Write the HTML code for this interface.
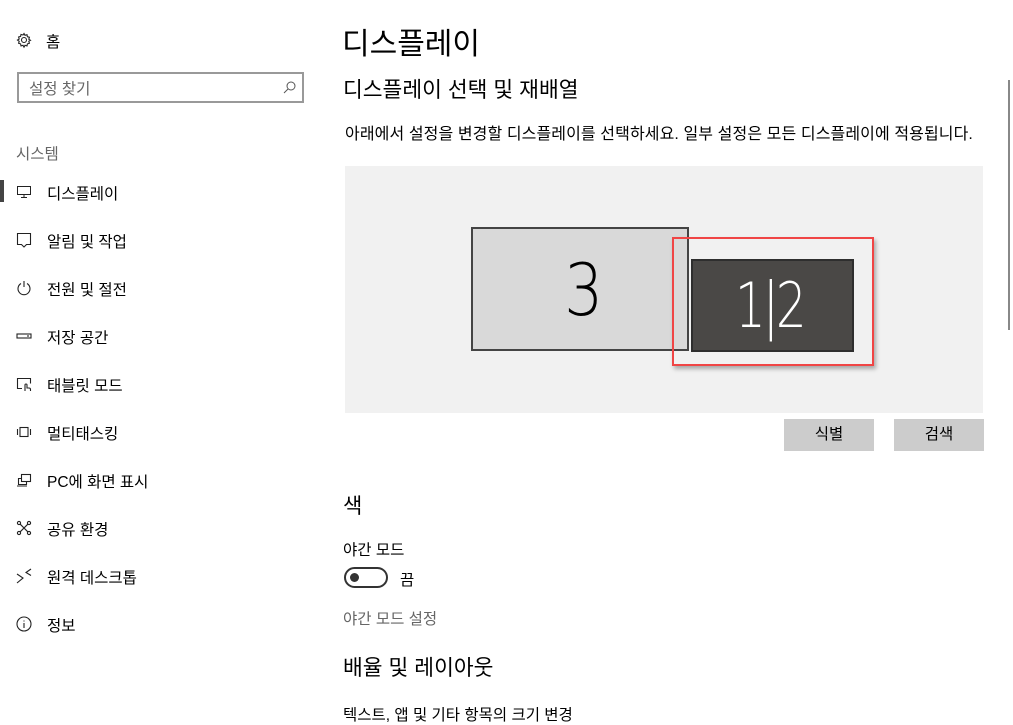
<!DOCTYPE html>
<html><head><meta charset="utf-8"><style>
*{margin:0;padding:0;box-sizing:border-box}
body{width:1013px;height:711px;overflow:hidden;background:#fff;font-family:"Liberation Sans","Noto Sans CJK KR","NanumGothic",sans-serif;color:#000;position:relative}
.a{position:absolute;white-space:nowrap}
.nav{font-size:15.5px;color:#000}
.ic{position:absolute;left:16px;width:16px;height:16px}
svg{overflow:visible}
</style></head><body>
<svg class="ic" style="top:32px" viewBox="0 0 16 16" fill="none" stroke="#222" stroke-width="1.1"><circle cx="8" cy="8" r="2.5"/><path d="M8 1.5l1 1.8 2-.6.4 2 2 .6-.6 2 1.7 1-1.7 1 .6 2-2 .6-.4 2-2-.6-1 1.8-1-1.8-2 .6-.4-2-2-.6.6-2L1.5 8l1.7-1-.6-2 2-.6.4-2 2 .6z"/></svg>
<div class="a nav" style="left:46px;top:30px">홈</div>
<div class="a" style="left:17px;top:72px;width:287px;height:31px;border:2px solid #999"></div>
<div class="a" style="left:29px;top:77px;font-size:15.5px;color:#666">설정 찾기</div>
<svg class="a" style="left:283px;top:81px;width:13px;height:13px" viewBox="0 0 13 13" fill="none" stroke="#555" stroke-width="1"><circle cx="8" cy="5" r="4"/><path d="M5 8L1 12"/></svg>
<div class="a" style="left:16px;top:142px;font-size:15.5px;color:#666">시스템</div>
<div class="a" style="left:0;top:180px;width:4px;height:22px;background:#444"></div>

<svg class="ic" style="top:184px" viewBox="0 0 16 16" fill="none" stroke="#222" stroke-width="1"><rect x="1.5" y="2.5" width="13" height="8"/><path d="M8 10.5v3M5 13.5h6"/></svg>
<div class="a nav" style="left:47px;top:182px">디스플레이</div>
<svg class="ic" style="top:232px" viewBox="0 0 16 16" fill="none" stroke="#222" stroke-width="1.1"><path d="M1.5 1.5h13v11h-4l-2.5 2.5-2.5-2.5h-4z"/></svg>
<div class="a nav" style="left:47px;top:230px">알림 및 작업</div>
<svg class="ic" style="top:280px" viewBox="0 0 16 16" fill="none" stroke="#222" stroke-width="1.1"><path d="M5 3.5a6 6 0 1 0 6 0M8 1v6"/></svg>
<div class="a nav" style="left:47px;top:278px">전원 및 절전</div>
<svg class="ic" style="top:328px" viewBox="0 0 16 16" fill="none" stroke="#222" stroke-width="1.1"><rect x="1" y="6" width="14" height="4"/><path d="M11 8h2"/></svg>
<div class="a nav" style="left:47px;top:326px">저장 공간</div>
<svg class="ic" style="top:376px" viewBox="0 0 16 16" fill="none" stroke="#222" stroke-width="1.1"><path d="M6 12.5H1.5v-10h13v5"/><path d="M9 15v-6a1 1 0 0 1 2 0v3h2a1.5 1.5 0 0 1 1.5 1.5V15"/></svg>
<div class="a nav" style="left:47px;top:374px">태블릿 모드</div>
<svg class="ic" style="top:424px" viewBox="0 0 16 16" fill="none" stroke="#222" stroke-width="1.1"><rect x="4" y="3.5" width="8" height="9"/><path d="M1.5 5v6M14.5 5v6"/></svg>
<div class="a nav" style="left:47px;top:422px">멀티태스킹</div>
<svg class="ic" style="top:472px" viewBox="0 0 16 16" fill="none" stroke="#222" stroke-width="1.1"><rect x="5.5" y="2.5" width="9" height="7"/><path d="M5.5 6.5h-3v6h8v-3M1 14h10"/></svg>
<div class="a nav" style="left:47px;top:470px">PC에 화면 표시</div>
<svg class="ic" style="top:520px" viewBox="0 0 16 16" fill="none" stroke="#222" stroke-width="1.1"><circle cx="3" cy="3" r="1.6"/><circle cx="13" cy="3" r="1.6"/><circle cx="3" cy="13" r="1.6"/><circle cx="13" cy="13" r="1.6"/><path d="M4.2 4.2l7.6 7.6M11.8 4.2l-7.6 7.6"/></svg>
<div class="a nav" style="left:47px;top:518px">공유 환경</div>
<svg class="ic" style="top:568px" viewBox="0 0 16 16" fill="none" stroke="#222" stroke-width="1.1"><path d="M1 6l6 4-6 5M15 1l-5 3.5 5 3"/></svg>
<div class="a nav" style="left:47px;top:566px">원격 데스크톱</div>
<svg class="ic" style="top:616px" viewBox="0 0 16 16" fill="none" stroke="#222" stroke-width="1.1"><circle cx="8" cy="8" r="7"/><path d="M8 7v5M8 4.5v1"/></svg>
<div class="a nav" style="left:47px;top:614px">정보</div>

<div class="a" style="left:342px;top:19px;font-size:30px">디스플레이</div>
<div class="a" style="left:343px;top:73px;font-size:21.5px">디스플레이 선택 및 재배열</div>
<div class="a" style="left:345px;top:120px;font-size:16px;letter-spacing:0.1px">아래에서 설정을 변경할 디스플레이를 선택하세요. 일부 설정은 모든 디스플레이에 적용됩니다.</div>
<div class="a" style="left:1008px;top:80px;width:2px;height:250px;background:#888"></div>

<div class="a" style="left:345px;top:166px;width:638px;height:247px;background:#f1f1f1"></div>
<div class="a" style="left:471px;top:227px;width:218px;height:124px;background:#d9d9d9;border:2px solid #444"></div>
<div class="a" style="left:561px;top:245px;font-size:72px;font-weight:300;font-family:'DejaVu Sans','Liberation Sans',sans-serif;line-height:90px;transform:scaleX(.85);letter-spacing:-2px">3</div>
<div class="a" style="left:672px;top:237px;width:202px;height:129px;border:2px solid #f04545;box-shadow:2px 3px 4px rgba(0,0,0,.3)"></div>
<div class="a" style="left:691px;top:259px;width:163px;height:93px;background:#4a4846;border:2px solid #2e2e2e"></div>
<div class="a" style="left:735px;top:265px;font-size:62px;color:#fff;font-family:'DejaVu Sans','Liberation Sans',sans-serif;line-height:82px;font-weight:300;transform:scaleX(.78);transform-origin:left;letter-spacing:-4px">1|2</div>
<div class="a" style="left:784px;top:419px;width:90px;height:32px;background:#ccc;font-size:15.5px;text-align:center;line-height:32px">식별</div>
<div class="a" style="left:894px;top:419px;width:90px;height:32px;background:#ccc;font-size:15.5px;text-align:center;line-height:32px">검색</div>

<div class="a" style="left:343px;top:490px;font-size:21px">색</div>
<div class="a" style="left:343px;top:538px;font-size:15.5px">야간 모드</div>
<div class="a" style="left:344px;top:567px;width:44px;height:21px;border:2px solid #333;border-radius:11px"></div>
<div class="a" style="left:350px;top:573px;width:9px;height:9px;background:#333;border-radius:50%"></div>
<div class="a" style="left:400px;top:568px;font-size:15.5px">끔</div>
<div class="a" style="left:343px;top:607px;font-size:15.5px;color:#666">야간 모드 설정</div>
<div class="a" style="left:343px;top:651px;font-size:21.5px">배율 및 레이아웃</div>
<div class="a" style="left:343px;top:703px;font-size:15.5px">텍스트, 앱 및 기타 항목의 크기 변경</div>
</body></html>
